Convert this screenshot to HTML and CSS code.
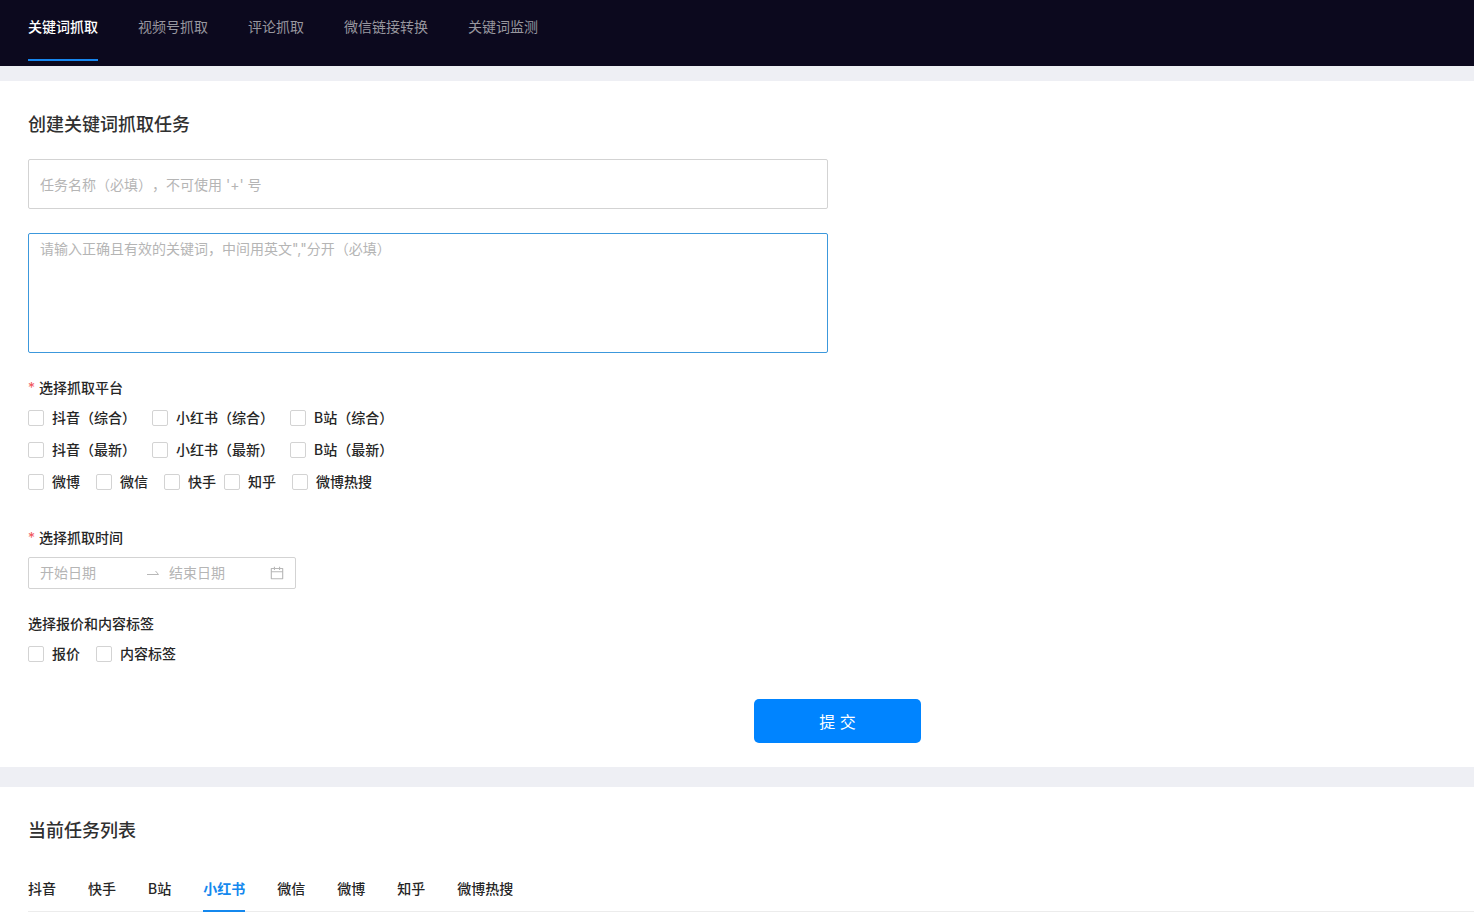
FILE: index.html
```html
<!DOCTYPE html>
<html lang="zh-CN">
<head>
<meta charset="utf-8">
<title>关键词抓取</title>
<link rel="stylesheet" href="styles.css">
</head>
<body>
<header class="topbar">
  <nav class="topnav">
    <a class="topnav-link active" href="#">关键词抓取</a>
    <a class="topnav-link" href="#">视频号抓取</a>
    <a class="topnav-link" href="#">评论抓取</a>
    <a class="topnav-link" href="#">微信链接转换</a>
    <a class="topnav-link" href="#">关键词监测</a>
  </nav>
</header>
<main class="page">
  <section class="panel">
    <h2 class="panel-title">创建关键词抓取任务</h2>
    <form class="task-form">
      <input class="field name-field" type="text" aria-label="任务名称" placeholder="任务名称（必填），不可使用 '+' 号">
      <textarea class="field words-field" aria-label="关键词" placeholder="请输入正确且有效的关键词，中间用英文&quot;,&quot;分开（必填）"></textarea>
      <fieldset class="group platforms">
        <legend class="group-label required">选择抓取平台</legend>
        <div class="check-row">
          <label class="check"><input type="checkbox">抖音（综合）</label>
          <label class="check"><input type="checkbox">小红书（综合）</label>
          <label class="check"><input type="checkbox">B站（综合）</label>
        </div>
        <div class="check-row">
          <label class="check"><input type="checkbox">抖音（最新）</label>
          <label class="check"><input type="checkbox">小红书（最新）</label>
          <label class="check"><input type="checkbox">B站（最新）</label>
        </div>
        <div class="check-row">
          <label class="check"><input type="checkbox">微博</label>
          <label class="check"><input type="checkbox">微信</label>
          <label class="check tight"><input type="checkbox">快手</label>
          <label class="check"><input type="checkbox">知乎</label>
          <label class="check"><input type="checkbox">微博热搜</label>
        </div>
      </fieldset>
      <fieldset class="group period">
        <legend class="group-label required">选择抓取时间</legend>
        <div class="date-range">
          <input class="date-input" type="text" aria-label="开始日期" placeholder="开始日期">
          <svg class="range-arrow" viewBox="0 0 16 16" aria-hidden="true"><path d="M2 9.500H13.500L10.500 6"/></svg>
          <input class="date-input" type="text" aria-label="结束日期" placeholder="结束日期">
          <svg class="calendar" viewBox="64 64 896 896" aria-hidden="true"><path d="M880 184H712v-64c0-4.400-3.600-8-8-8h-56c-4.400 0-8 3.600-8 8v64H384v-64c0-4.400-3.600-8-8-8h-56c-4.400 0-8 3.600-8 8v64H144c-17.700 0-32 14.300-32 32v664c0 17.700 14.300 32 32 32h736c17.700 0 32-14.300 32-32V216c0-17.700-14.300-32-32-32zm-40 656H184V460h656v380zM184 392V256h128v48c0 4.400 3.600 8 8 8h56c4.400 0 8-3.600 8-8v-48h256v48c0 4.400 3.600 8 8 8h56c4.400 0 8-3.600 8-8v-48h128v136H184z"/></svg>
        </div>
      </fieldset>
      <fieldset class="group extras">
        <legend class="group-label">选择报价和内容标签</legend>
        <div class="check-row">
          <label class="check"><input type="checkbox">报价</label>
          <label class="check"><input type="checkbox">内容标签</label>
        </div>
      </fieldset>
      <button class="submit" type="button">提 交</button>
    </form>
  </section>
  <section class="panel list-panel">
    <h2 class="panel-title strong">当前任务列表</h2>
    <div class="tabs" role="tablist">
      <button class="tab" type="button" role="tab">抖音</button>
      <button class="tab" type="button" role="tab">快手</button>
      <button class="tab" type="button" role="tab">B站</button>
      <button class="tab selected" type="button" role="tab" aria-selected="true">小红书</button>
      <button class="tab" type="button" role="tab">微信</button>
      <button class="tab" type="button" role="tab">微博</button>
      <button class="tab" type="button" role="tab">知乎</button>
      <button class="tab" type="button" role="tab">微博热搜</button>
    </div>
  </section>
</main>
</body>
</html>
```
FILE: styles.css
```css
* {
  box-sizing: border-box;
}

body {
  margin: 0;
  background: #fff;
  color: #262626;
  font: 14px/22px Inter, "Noto Sans CJK SC", sans-serif;
  font-weight: 400;
  text-spacing-trim: space-all;
}

input,
textarea,
button {
  font: inherit;
  color: inherit;
  text-spacing-trim: inherit;
}

.topbar {
  padding: 16px 28px 5px;
  background: #0c091e;
}

.topnav {
  display: flex;
  gap: 40px;
}

.topnav-link {
  padding-bottom: 21px;
  border-bottom: 2px solid transparent;
  color: #98979f;
  text-decoration: none;
}

.topnav-link.active {
  border-color: #1786ef;
  color: #fff;
  font-weight: 500;
}

.page {
  display: flex;
  flex-direction: column;
  gap: 20px;
  padding-top: 15px;
  background: #eeeff4;
}

.panel {
  padding: 30px 0 24px 28px;
  background: #fff;
}

.panel-title {
  margin: 0 0 20px;
  color: #303030;
  font-size: 18px;
  line-height: 28px;
  font-weight: 500;
}

.task-form {
  display: flex;
  flex-direction: column;
  align-items: flex-start;
}

.field {
  width: 100%;
  max-width: 800px;
  margin: 0 0 24px;
  padding: 4px 11px;
  border: 1px solid #d3d3d3;
  border-radius: 2px;
  background: #fff;
  outline: none;
}

.name-field {
  height: 50px;
}

.words-field {
  height: 120px;
  border-color: #3c98dc;
  resize: none;
}

::placeholder {
  color: #b5b5b5;
  opacity: 1;
}

.group {
  min-width: 0;
  margin: 0;
  padding: 0;
  border: 0;
  font-weight: 500;
}

.group-label {
  padding: 0;
}

.required::before {
  content: "*";
  display: inline-block;
  width: 11px;
  color: #f0565a;
  font-weight: 400;
}

.platforms {
  margin-bottom: 29px;
}

.period {
  margin-bottom: 24px;
}

.extras {
  margin-bottom: 29px;
}

.check-row {
  display: flex;
  gap: 16px;
  align-items: center;
  height: 32px;
}

.group-label + .check-row {
  margin-top: 3px;
}

.check {
  display: flex;
  gap: 8px;
  align-items: center;
}

.check.tight {
  margin-right: -8px;
}

.check input {
  appearance: none;
  width: 16px;
  height: 16px;
  margin: 0;
  border: 1px solid #d3d3d3;
  border-radius: 2px;
  background: #fff;
}

.check input:checked {
  background: #0084ff;
}

.date-range {
  display: flex;
  align-items: center;
  width: 268px;
  height: 32px;
  margin-top: 8px;
  padding: 0 11px;
  border: 1px solid #d3d3d3;
  border-radius: 2px;
}

.date-input {
  flex: 1;
  min-width: 0;
  padding: 0;
  border: 0;
  outline: none;
  background: none;
  font-weight: 400;
}

.range-arrow {
  width: 16px;
  height: 16px;
  margin: 0 8px;
  fill: none;
  stroke: #b8b8b8;
}

.calendar {
  width: 14px;
  height: 14px;
  margin-left: 4px;
  fill: #b8b8b8;
}

.submit {
  width: 167px;
  height: 44px;
  margin-left: 726px;
  padding: 2px 0 0;
  border: 0;
  border-radius: 5px;
  background: #0084ff;
  color: #fff;
  font-size: 16px;
}

.list-panel {
  padding-bottom: 10px;
}

.strong {
  margin-bottom: 33px;
}

.tabs {
  display: flex;
  gap: 32px;
  border-bottom: 1px solid #ececec;
}

.tab {
  margin-bottom: -1px;
  padding: 0 0 10px;
  border: 0;
  border-bottom: 2px solid transparent;
  background: none;
  font-weight: 500;
}

.tab.selected {
  border-color: #1488ee;
  color: #1488ee;
  font-weight: 700;
}
```
